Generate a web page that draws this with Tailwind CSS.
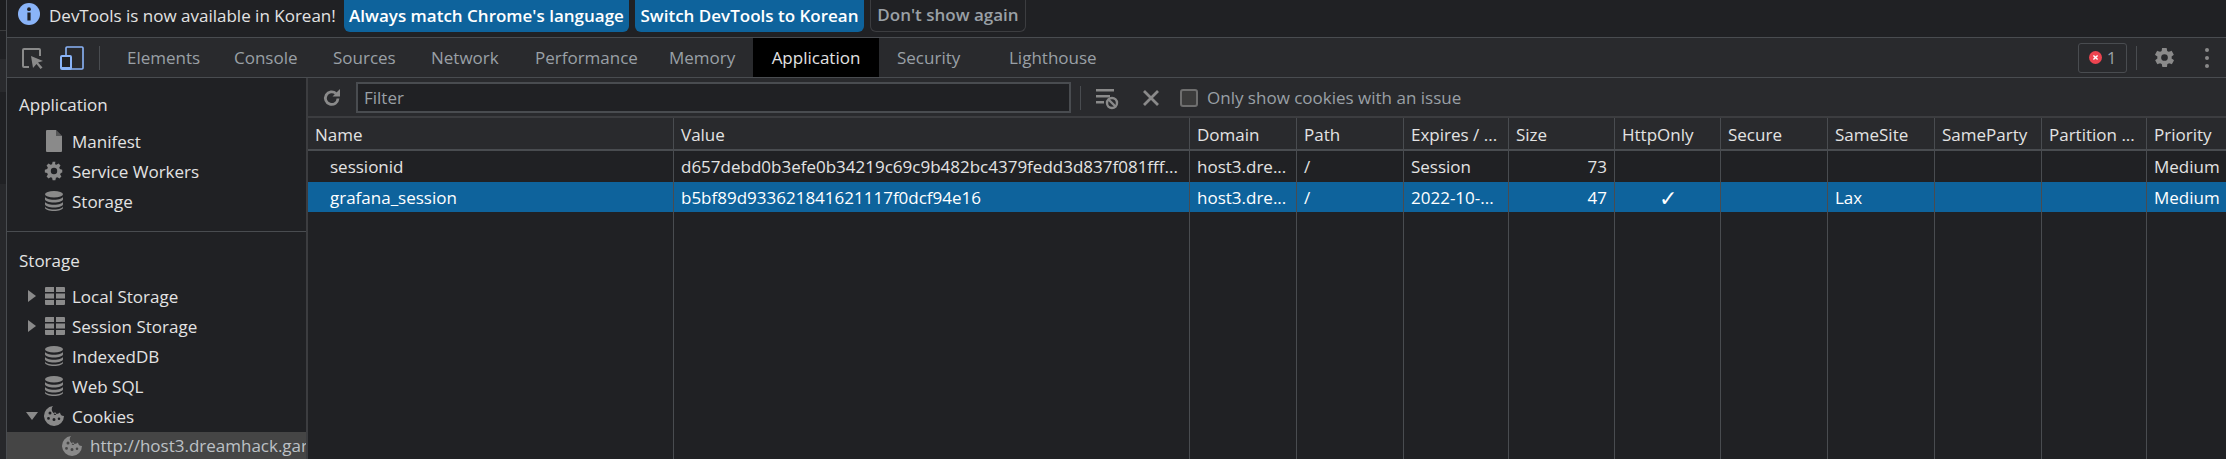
<!doctype html>
<html>
<head>
<meta charset="utf-8">
<script src="https://cdn.jsdelivr.net/npm/@tailwindcss/browser@4"></script>
</head>
<body class="m-0 bg-[#202124]">
<div class="flex w-[2226px] h-[459px] overflow-hidden bg-[#202124] text-[#e3e3e3] text-[17px] font-['Open_Sans',sans-serif] leading-none">
  <div class="w-[7px] shrink-0 flex flex-col border-r border-[#494c50]">
    <div class="h-[31px] bg-[#1c1d1f] border-b border-[#3a3b3d]"></div>
    <div class="h-[28px] bg-[#202124]"></div>
    <div class="h-[33px] bg-[#292a2d]"></div>
    <div class="h-[92px] bg-[#202124]"></div>
    <div class="flex-1 bg-[#27282b]"></div>
  </div>
  <div class="flex-1 flex flex-col min-w-0">
    <!-- infobar -->
    <div class="h-[38px] shrink-0 flex items-start border-b border-[#494c50] bg-[#202124]">
      <svg class="ml-[11px] mt-[3px] w-[22px] h-[22px]" viewBox="0 0 22 22"><circle cx="11" cy="11" r="11" fill="#8ab4f8"/><rect x="9.4" y="9.5" width="3.2" height="8" fill="#202124"/><circle cx="11" cy="6.2" r="1.9" fill="#202124"/></svg>
      <span class="ml-[9px] w-[285px] mt-[4px] h-[22px] flex items-center whitespace-nowrap">DevTools is now available in Korean!</span>
      <button class="ml-[10px] h-[32px] w-[285px] pb-[2px] rounded-b-[6px] bg-[#0e639c] text-white font-semibold whitespace-nowrap">Always match Chrome's language</button>
      <button class="ml-[6px] h-[32px] w-[229px] pb-[2px] rounded-b-[6px] bg-[#0e639c] text-white font-semibold whitespace-nowrap">Switch DevTools to Korean</button>
      <button class="ml-[6px] h-[32px] w-[156px] pb-[2px] rounded-b-[6px] border border-[#3c3d40] border-t-0 text-[#9aa0a6] font-semibold whitespace-nowrap">Don't show again</button>
    </div>
    <!-- tabs -->
    <div class="h-[40px] shrink-0 flex items-center border-b border-[#494c50] bg-[#292a2d] text-[#9aa0a6]">
      <svg class="ml-[15px] w-[22px] h-[22px]" viewBox="0 0 22 22" fill="none"><path d="M7 20H2a1 1 0 0 1-1-1V3a1 1 0 0 1 1-1h15a1 1 0 0 1 1 1v6" stroke="#8a8a8a" stroke-width="2"/><path d="M9 9l12 5-5 1.6 4.5 5-2 1.4-4-5L11 21z" fill="#8a8a8a"/></svg>
      <svg class="ml-[16px] w-[24px] h-[24px]" viewBox="0 0 24 24" fill="none"><rect x="6" y="1" width="17" height="22" rx="1" stroke="#8ab4f8" stroke-width="1.6"/><rect x="1" y="10" width="10" height="13" rx="1" fill="#202124" stroke="#8ab4f8" stroke-width="2"/><rect x="1" y="21" width="10" height="2" fill="#8ab4f8"/></svg>
      <div class="ml-[15px] w-px h-[24px] bg-[#494c50]"></div>
      <span class="ml-[27px] w-[107px]">Elements</span>
      <span class="w-[99px]">Console</span>
      <span class="w-[98px]">Sources</span>
      <span class="w-[104px]">Network</span>
      <span class="w-[134px]">Performance</span>
      <span class="w-[84px]">Memory</span>
      <span class="w-[126px] h-[39px] flex items-center justify-center bg-black text-[#e3e3e3]">Application</span>
      <span class="ml-[18px] w-[112px]">Security</span>
      <span>Lighthouse</span>
      <div class="ml-auto flex items-center">
        <div class="w-[49px] h-[30px] rounded-[3px] border border-[#494c50] flex items-center justify-center gap-[5px]">
          <svg class="w-[13px] h-[13px]" viewBox="0 0 13 13"><circle cx="6.5" cy="6.5" r="6.5" fill="#ee4450"/><path d="M4.4 4.4l4.2 4.2M8.6 4.4L4.4 8.6" stroke="#fff" stroke-width="1.4"/></svg>
          <span>1</span>
        </div>
        <div class="ml-[9px] w-px h-[24px] bg-[#494c50]"></div>
        <svg class="ml-[16px] w-[23px] h-[23px]" viewBox="0 0 24 24"><path fill="#8a8a8a" fill-rule="evenodd" d="M19.4 13c0-.3.1-.6.1-1s0-.7-.1-1l2.1-1.6c.2-.1.2-.4.1-.6l-2-3.5c-.1-.2-.4-.3-.6-.2l-2.5 1c-.5-.4-1.1-.7-1.7-1l-.4-2.6c0-.3-.2-.5-.5-.5h-4c-.3 0-.5.2-.5.4l-.4 2.7c-.6.2-1.2.6-1.7 1l-2.5-1c-.2-.1-.5 0-.6.2l-2 3.5c-.1.2-.1.5.1.6L4.6 11c0 .3-.1.6-.1 1s0 .7.1 1l-2.1 1.6c-.2.1-.2.4-.1.6l2 3.5c.1.2.4.3.6.2l2.5-1c.5.4 1.1.7 1.7 1l.4 2.6c0 .3.2.5.5.5h4c.3 0 .5-.2.5-.4l.4-2.7c.6-.2 1.2-.6 1.7-1l2.5 1c.2.1.5 0 .6-.2l2-3.5c.1-.2.1-.5-.1-.6L19.4 13zM12 15.5a3.5 3.5 0 1 1 0-7 3.5 3.5 0 0 1 0 7z"/></svg>
        <div class="ml-[27px] mr-[15px] w-[8px] flex flex-col items-center gap-[4px]">
          <span class="w-[4px] h-[4px] rounded-full bg-[#8a8a8a]"></span><span class="w-[4px] h-[4px] rounded-full bg-[#8a8a8a]"></span><span class="w-[4px] h-[4px] rounded-full bg-[#8a8a8a]"></span>
        </div>
      </div>
    </div>
    <div class="flex-1 flex min-h-0">
      <!-- sidebar -->
      <div class="w-[301px] shrink-0 border-r-2 border-[#3c3d40] flex flex-col">
        <div class="h-[154px] pt-[11px] border-b border-[#494c50] shrink-0">
          <div class="pl-[12px] h-[30px] mb-[7px] flex items-center">Application</div>
          <div class="flex items-center h-[30px]">
            <svg class="ml-[39px] w-[16px] h-[22px]" viewBox="0 0 16 22"><path d="M1 0h9l6 6v15a1 1 0 0 1-1 1H1a1 1 0 0 1-1-1V1a1 1 0 0 1 1-1z" fill="#8a8a8a"/><path d="M10 0v6h6" fill="#202124" opacity=".5"/></svg>
            <span class="ml-[10px]">Manifest</span>
          </div>
          <div class="flex items-center h-[30px]">
            <svg class="ml-[36px] w-[22px] h-[22px]" viewBox="0 0 24 24"><path fill="#8a8a8a" fill-rule="evenodd" d="M21 13.5v-3l-2.6-.6c-.2-.6-.4-1.1-.7-1.6l1.4-2.3-2.1-2.1-2.3 1.4c-.5-.3-1-.5-1.6-.7L13.5 2h-3l-.6 2.6c-.6.2-1.1.4-1.6.7L6 3.9 3.9 6l1.4 2.3c-.3.5-.5 1-.7 1.6L2 10.5v3l2.6.6c.2.6.4 1.1.7 1.6L3.9 18 6 20.1l2.3-1.4c.5.3 1 .5 1.6.7l.6 2.6h3l.6-2.6c.6-.2 1.1-.4 1.6-.7l2.3 1.4 2.1-2.1-1.4-2.3c.3-.5.5-1 .7-1.6zM12 15.500a3.500 3.500 0 1 1 0-7 3.500 3.500 0 0 1 0 7z"/></svg>
            <span class="ml-[7px]">Service Workers</span>
          </div>
          <div class="flex items-center h-[30px]">
            <svg class="ml-[38px] w-[18px] h-[20px]" viewBox="0 0 18 20" fill="#8a8a8a"><ellipse cx="9" cy="3.2" rx="9" ry="3.2"/><path d="M0 5.6c0 1.8 4 3.2 9 3.2s9-1.4 9-3.2v2.6c0 1.8-4 3.2-9 3.2S0 10 0 8.2zM0 10.6c0 1.8 4 3.2 9 3.2s9-1.4 9-3.2v2.6c0 1.8-4 3.2-9 3.2S0 15 0 13.2zM0 15.2c0 1.8 4 3.2 9 3.2s9-1.4 9-3.2v1.6c0 1.8-4 3.2-9 3.2s-9-1.4-9-3.2z"/></svg>
            <span class="ml-[9px]">Storage</span>
          </div>
        </div>
        <div class="pl-[12px] h-[30px] mt-[13px] flex items-center shrink-0">Storage</div>
        <div class="mt-[6px] flex items-center h-[30px] shrink-0">
          <svg class="ml-[21px] w-[8px] h-[12px]" viewBox="0 0 8 12"><path d="M0 0l8 6-8 6z" fill="#8a8a8a"/></svg>
          <svg class="ml-[9px] w-[20px] h-[18px]" viewBox="0 0 20 18" fill="#8a8a8a"><path d="M0 1a1 1 0 0 1 1-1h8v5H0zM11 0h8a1 1 0 0 1 1 1v4h-9zM0 6.500h9v5H0zM11 6.500h9v5h-9zM0 13h9v5H1a1 1 0 0 1-1-1zM11 13h9v4a1 1 0 0 1-1 1h-8z"/></svg>
          <span class="ml-[7px]">Local Storage</span>
        </div>
        <div class="flex items-center h-[30px] shrink-0">
          <svg class="ml-[21px] w-[8px] h-[12px]" viewBox="0 0 8 12"><path d="M0 0l8 6-8 6z" fill="#8a8a8a"/></svg>
          <svg class="ml-[9px] w-[20px] h-[18px]" viewBox="0 0 20 18" fill="#8a8a8a"><path d="M0 1a1 1 0 0 1 1-1h8v5H0zM11 0h8a1 1 0 0 1 1 1v4h-9zM0 6.500h9v5H0zM11 6.500h9v5h-9zM0 13h9v5H1a1 1 0 0 1-1-1zM11 13h9v4a1 1 0 0 1-1 1h-8z"/></svg>
          <span class="ml-[7px]">Session Storage</span>
        </div>
        <div class="flex items-center h-[30px] shrink-0">
          <svg class="ml-[38px] w-[18px] h-[20px]" viewBox="0 0 18 20" fill="#8a8a8a"><ellipse cx="9" cy="3.2" rx="9" ry="3.2"/><path d="M0 5.6c0 1.8 4 3.2 9 3.2s9-1.4 9-3.2v2.6c0 1.8-4 3.2-9 3.2S0 10 0 8.2zM0 10.6c0 1.8 4 3.2 9 3.2s9-1.4 9-3.2v2.6c0 1.8-4 3.2-9 3.2S0 15 0 13.2zM0 15.2c0 1.8 4 3.2 9 3.2s9-1.4 9-3.2v1.6c0 1.8-4 3.2-9 3.2s-9-1.4-9-3.2z"/></svg>
          <span class="ml-[9px]">IndexedDB</span>
        </div>
        <div class="flex items-center h-[30px] shrink-0">
          <svg class="ml-[38px] w-[18px] h-[20px]" viewBox="0 0 18 20" fill="#8a8a8a"><ellipse cx="9" cy="3.2" rx="9" ry="3.2"/><path d="M0 5.6c0 1.8 4 3.2 9 3.2s9-1.4 9-3.2v2.6c0 1.8-4 3.2-9 3.2S0 10 0 8.2zM0 10.6c0 1.8 4 3.2 9 3.2s9-1.4 9-3.2v2.6c0 1.8-4 3.2-9 3.2S0 15 0 13.2zM0 15.2c0 1.8 4 3.2 9 3.2s9-1.4 9-3.2v1.6c0 1.8-4 3.2-9 3.2s-9-1.4-9-3.2z"/></svg>
          <span class="ml-[9px]">Web SQL</span>
        </div>
        <div class="flex items-center h-[30px] shrink-0">
          <svg class="ml-[19px] w-[12px] h-[8px]" viewBox="0 0 12 8"><path d="M0 0h12L6 8z" fill="#8a8a8a"/></svg>
          <svg class="ml-[6px] w-[20px] h-[20px]" viewBox="0 0 20 20"><path fill="#8a8a8a" fill-rule="evenodd" d="M9 0a10 10 0 1 0 11 10 4 4 0 0 1-4-3.500A4.500 4.500 0 0 1 9 0zM6 5.500a1.500 1.500 0 1 1 0 3 1.500 1.500 0 0 1 0-3zm5 1a1.300 1.300 0 1 1 0 2.600 1.300 1.300 0 0 1 0-2.600zM4.500 11a1.400 1.400 0 1 1 0 2.800 1.400 1.400 0 0 1 0-2.800zm5.500 1a1.500 1.500 0 1 1 0 3 1.500 1.500 0 0 1 0-3zm5-.500a1.300 1.300 0 1 1 0 2.600 1.300 1.300 0 0 1 0-2.600z"/></svg>
          <span class="ml-[8px]">Cookies</span>
        </div>
        <div class="mt-[1px] flex-1 bg-[#454545] flex items-center overflow-hidden min-h-0 text-[#bdc1c6]">
          <svg class="ml-[55px] shrink-0 w-[20px] h-[20px]" viewBox="0 0 20 20"><path fill="#8a8a8a" fill-rule="evenodd" d="M9 0a10 10 0 1 0 11 10 4 4 0 0 1-4-3.500A4.500 4.500 0 0 1 9 0zM6 5.500a1.500 1.500 0 1 1 0 3 1.500 1.500 0 0 1 0-3zm5 1a1.300 1.300 0 1 1 0 2.600 1.300 1.300 0 0 1 0-2.600zM4.500 11a1.400 1.400 0 1 1 0 2.800 1.400 1.400 0 0 1 0-2.800zm5.500 1a1.500 1.500 0 1 1 0 3 1.500 1.500 0 0 1 0-3zm5-.500a1.300 1.300 0 1 1 0 2.600 1.300 1.300 0 0 1 0-2.600z"/></svg>
          <span class="ml-[8px] whitespace-nowrap">http://host3.dreamhack.gar</span>
        </div>
      </div>
      <!-- right pane -->
      <div class="flex-1 min-w-0 flex flex-col">
        <div class="h-[40px] pt-[1px] shrink-0 flex items-center border-b-2 border-[#3c3d40] bg-[#292a2d] text-[#9aa0a6]">
          <svg class="ml-[14px] w-[20px] h-[20px]" viewBox="0 0 20 20" fill="none"><path d="M16 10.500a6.300 6.300 0 1 1-2-5" stroke="#8a8a8a" stroke-width="2.800"/><path d="M18 1v7.500h-7.500z" fill="#8a8a8a"/></svg>
          <div class="ml-[14px] w-[715px] h-[31px] border-2 border-[#494c50] bg-[#202124] flex items-center pl-[6px]">Filter</div>
          <div class="ml-[9px] w-px h-[24px] bg-[#494c50]"></div>
          <svg class="ml-[15px] w-[24px] h-[24px]" viewBox="0 0 24 24" fill="none"><path d="M0 3h18v2.500H0zM0 9h14v2.500H0zM0 15h8v2.500H0z" fill="#8a8a8a"/><circle cx="16" cy="17" r="5" stroke="#8a8a8a" stroke-width="2.400"/><path d="M12.500 13.500l7 7" stroke="#8a8a8a" stroke-width="2.400"/></svg>
          <svg class="ml-[22px] w-[18px] h-[18px]" viewBox="0 0 18 18"><path d="M2 2l14 14M16 2L2 16" stroke="#8a8a8a" stroke-width="2.800"/></svg>
          <div class="ml-[20px] w-[18px] h-[18px] rounded-[3px] border-2 border-[#6e6e6e] bg-[#3b3b3b]"></div>
          <span class="ml-[9px]">Only show cookies with an issue</span>
        </div>
        <div class="flex-1 min-h-0 grid grid-cols-[366px_516px_107px_107px_105px_106px_106px_107px_107px_107px_105px_1fr] grid-rows-[33px_31px_30px_1fr]">
          <div class="flex items-center pt-[2px] px-[7px] bg-[#292a2d] border-r border-b-2 border-[#494c50]">Name</div>
          <div class="flex items-center pt-[2px] px-[7px] bg-[#292a2d] border-r border-b-2 border-[#494c50]">Value</div>
          <div class="flex items-center pt-[2px] px-[7px] bg-[#292a2d] border-r border-b-2 border-[#494c50]">Domain</div>
          <div class="flex items-center pt-[2px] px-[7px] bg-[#292a2d] border-r border-b-2 border-[#494c50]">Path</div>
          <div class="flex items-center pt-[2px] px-[7px] bg-[#292a2d] border-r border-b-2 border-[#494c50] whitespace-nowrap">Expires / ...</div>
          <div class="flex items-center pt-[2px] px-[7px] bg-[#292a2d] border-r border-b-2 border-[#494c50]">Size</div>
          <div class="flex items-center pt-[2px] px-[7px] bg-[#292a2d] border-r border-b-2 border-[#494c50]">HttpOnly</div>
          <div class="flex items-center pt-[2px] px-[7px] bg-[#292a2d] border-r border-b-2 border-[#494c50]">Secure</div>
          <div class="flex items-center pt-[2px] px-[7px] bg-[#292a2d] border-r border-b-2 border-[#494c50]">SameSite</div>
          <div class="flex items-center pt-[2px] px-[7px] bg-[#292a2d] border-r border-b-2 border-[#494c50]">SameParty</div>
          <div class="flex items-center pt-[2px] px-[7px] bg-[#292a2d] border-r border-b-2 border-[#494c50] whitespace-nowrap">Partition ...</div>
          <div class="flex items-center pt-[2px] px-[7px] bg-[#292a2d] border-b-2 border-[#494c50]">Priority</div>

          <div class="flex items-center pl-[22px] border-r border-[#494c50]">sessionid</div>
          <div class="flex items-center px-[7px] border-r border-[#494c50] whitespace-nowrap">d657debd0b3efe0b34219c69c9b482bc4379fedd3d837f081fff...</div>
          <div class="flex items-center px-[7px] border-r border-[#494c50] whitespace-nowrap">host3.dre...</div>
          <div class="flex items-center px-[7px] border-r border-[#494c50]">/</div>
          <div class="flex items-center px-[7px] border-r border-[#494c50]">Session</div>
          <div class="flex items-center justify-end px-[7px] border-r border-[#494c50]">73</div>
          <div class="border-r border-[#494c50]"></div>
          <div class="border-r border-[#494c50]"></div>
          <div class="border-r border-[#494c50]"></div>
          <div class="border-r border-[#494c50]"></div>
          <div class="border-r border-[#494c50]"></div>
          <div class="flex items-center px-[7px]">Medium</div>

          <div class="flex items-center pl-[22px] bg-[#0e639c] text-white border-r border-[#494c50]">grafana_session</div>
          <div class="flex items-center px-[7px] bg-[#0e639c] text-white border-r border-[#494c50]">b5bf89d933621841621117f0dcf94e16</div>
          <div class="flex items-center px-[7px] bg-[#0e639c] text-white border-r border-[#494c50] whitespace-nowrap">host3.dre...</div>
          <div class="flex items-center px-[7px] bg-[#0e639c] text-white border-r border-[#494c50]">/</div>
          <div class="flex items-center px-[7px] bg-[#0e639c] text-white border-r border-[#494c50] whitespace-nowrap">2022-10-...</div>
          <div class="flex items-center justify-end px-[7px] bg-[#0e639c] text-white border-r border-[#494c50]">47</div>
          <div class="flex items-center justify-center bg-[#0e639c] text-white text-[22px] border-r border-[#494c50]">✓</div>
          <div class="bg-[#0e639c] border-r border-[#494c50]"></div>
          <div class="flex items-center px-[7px] bg-[#0e639c] text-white border-r border-[#494c50]">Lax</div>
          <div class="bg-[#0e639c] border-r border-[#494c50]"></div>
          <div class="bg-[#0e639c] border-r border-[#494c50]"></div>
          <div class="flex items-center px-[7px] bg-[#0e639c] text-white">Medium</div>

          <div class="border-r border-[#494c50]"></div>
          <div class="border-r border-[#494c50]"></div>
          <div class="border-r border-[#494c50]"></div>
          <div class="border-r border-[#494c50]"></div>
          <div class="border-r border-[#494c50]"></div>
          <div class="border-r border-[#494c50]"></div>
          <div class="border-r border-[#494c50]"></div>
          <div class="border-r border-[#494c50]"></div>
          <div class="border-r border-[#494c50]"></div>
          <div class="border-r border-[#494c50]"></div>
          <div class="border-r border-[#494c50]"></div>
          <div></div>
        </div>
      </div>
    </div>
  </div>
</div>
</body>
</html>
